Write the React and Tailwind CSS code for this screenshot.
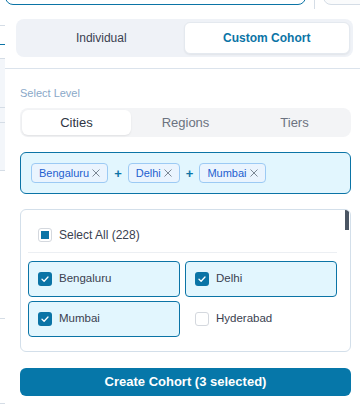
import React from "react";

const font = { fontFamily: "'Liberation Sans', Arial, sans-serif" };

function Check() {
  return (
    <span className="flex h-[14px] w-[14px] shrink-0 items-center justify-center rounded-[3px] bg-[#0b74a6]">
      <svg width="10" height="10" viewBox="0 0 10 10" fill="none">
        <path d="M2 5.2 L4.1 7.2 L8 3" stroke="white" strokeWidth="1.3" strokeLinecap="round" strokeLinejoin="round" />
      </svg>
    </span>
  );
}

function Empty() {
  return <span className="h-[14px] w-[14px] shrink-0 rounded-[3px] border border-[#d4d8de] bg-white" />;
}

function Cell({ label, checked }) {
  return (
    <div
      className={
        "flex h-[36px] items-center gap-[7px] rounded-[4px] border pl-[9px] " +
        (checked ? "border-[#0b74a6] bg-[#e2f6fe]" : "border-transparent bg-white")
      }
    >
      {checked ? <Check /> : <Empty />}
      {label ? <span className="text-[11.5px] text-[#3a4150]">{label}</span> : null}
    </div>
  );
}

function Tag({ label }) {
  return (
    <span className="flex h-[20px] items-center gap-[3px] rounded-[4px] border border-[#9ccaf4] bg-[#eaf4fe] pl-[7px] pr-[7px] text-[11px] text-[#1f5fcf]">
      {label}
      <svg width="8" height="8" viewBox="0 0 8 8">
        <path d="M0.5 0.5 L7.5 7.5 M7.5 0.5 L0.5 7.5" stroke="#7b8794" strokeWidth="1" />
      </svg>
    </span>
  );
}

function Plus() {
  return <span className="text-[13px] font-bold leading-none text-[#0b74a6]">+</span>;
}

export default function App() {
  return (
    <div className="relative h-[406px] w-[360px] overflow-hidden bg-white" style={font}>
      {/* underlying page fragments */}
      <div className="absolute left-0 top-[58px] h-[112px] w-[5px] bg-[#f3f6fa]" />
      <div className="absolute left-0 top-[25px] h-px w-[5px] bg-[#d5dde6]" />
      <div className="absolute left-0 top-[44px] h-px w-[5px] bg-[#0b74a6]" />
      <div className="absolute left-0 top-[58px] h-px w-[5px] bg-[#d5dde6]" />
      <div className="absolute left-0 top-[107px] h-px w-[5px] bg-[#d5dde6]" />
      <div className="absolute left-0 top-[122px] h-px w-[5px] bg-[#d5dde6]" />
      <div className="absolute left-0 top-[170px] h-px w-[5px] bg-[#d5dde6]" />
      <div className="absolute left-0 top-[318px] h-px w-[5px] bg-[#d5dde6]" />
      <div className="absolute left-0 top-[403px] h-px w-[5px] bg-[#d5dde6]" />
      <div className="absolute left-[5px] top-[-30px] h-[35px] w-[301px] rounded-lg border border-[#0b74a6] bg-white" />
      <div className="absolute left-[314px] top-0 h-[9px] w-px bg-[#d5dde6]" />
      <div className="absolute left-[323px] top-[-30px] h-[35px] w-[60px] rounded-lg border border-[#d5dde6] bg-[#fafbfc]" />

      {/* popover */}
      <div className="absolute left-[5px] top-[9px] w-[361px] bg-white">
        <div className="border-b border-[#dbe3ec] pb-[11px] pl-[11px] pr-[13px] pt-[10px]">
          <div className="flex h-[38px] rounded-lg bg-[#eff2f7] p-[3px]">
            <div className="flex flex-1 items-center justify-center text-[12px] text-[#3a4150]">Individual</div>
            <div className="flex flex-1 items-center justify-center rounded-md border border-[#e4e9ef] bg-white text-[12px] font-bold text-[#0b74a6] shadow-[0_1px_2px_rgba(0,0,0,0.06)]">
              Custom Cohort
            </div>
          </div>
        </div>

        <div className="px-[15px] pb-[12px] pt-[16px]">
          <div className="h-[16px] text-[11px] leading-[16px] text-[#8aa8c8]">Select Level</div>

          <div className="mt-[7px] flex h-[29px] rounded-lg bg-[#f3f4f6] p-[2px]">
            <div className="flex flex-1 items-center justify-center rounded-md bg-white text-[13px] text-[#2f3644] shadow-[0_1px_2px_rgba(0,0,0,0.08)]">
              Cities
            </div>
            <div className="flex flex-1 items-center justify-center text-[13px] text-[#6b7280]">Regions</div>
            <div className="flex flex-1 items-center justify-center text-[13px] text-[#6b7280]">Tiers</div>
          </div>

          <div className="mt-[15px] flex h-[42px] items-center gap-[6px] rounded-md border border-[#0b74a6] bg-[#e2f6fe] px-[10px]">
            <Tag label="Bengaluru" />
            <Plus />
            <Tag label="Delhi" />
            <Plus />
            <Tag label="Mumbai" />
          </div>

          <div className="relative mt-[15px] h-[143px] overflow-hidden rounded-md border border-[#d3dfea] bg-white">
            <div className="pl-[7px] pr-[13px]">
              <div className="flex items-center gap-[7px] border-b border-[#eceff3] pb-[7px] pl-[10px] pt-[15px]">
                <span className="flex h-[14px] w-[14px] items-center justify-center rounded-[3px] border border-[#d4d8de] bg-white">
                  <span className="h-[8px] w-[8px] bg-[#0b74a6]" />
                </span>
                <span className="text-[12px] leading-[20px] font-medium text-[#3a4150]">Select All (228)</span>
              </div>
              <div className="mt-[8px] grid grid-cols-2 gap-x-[5px] gap-y-[4px]">
                <Cell label="Bengaluru" checked />
                <Cell label="Delhi" checked />
                <Cell label="Mumbai" checked />
                <Cell label="Hyderabad" />
                <Cell />
                <Cell />
              </div>
            </div>
            <div className="absolute right-[1px] top-0 h-[20px] w-[4px] bg-[#4b5563]" />
          </div>

          <button className="mt-[16px] flex h-[28px] w-full items-center justify-center rounded-md bg-[#0677a9] text-[13px] font-bold text-white">
            Create Cohort (3 selected)
          </button>
        </div>
      </div>
    </div>
  );
}
